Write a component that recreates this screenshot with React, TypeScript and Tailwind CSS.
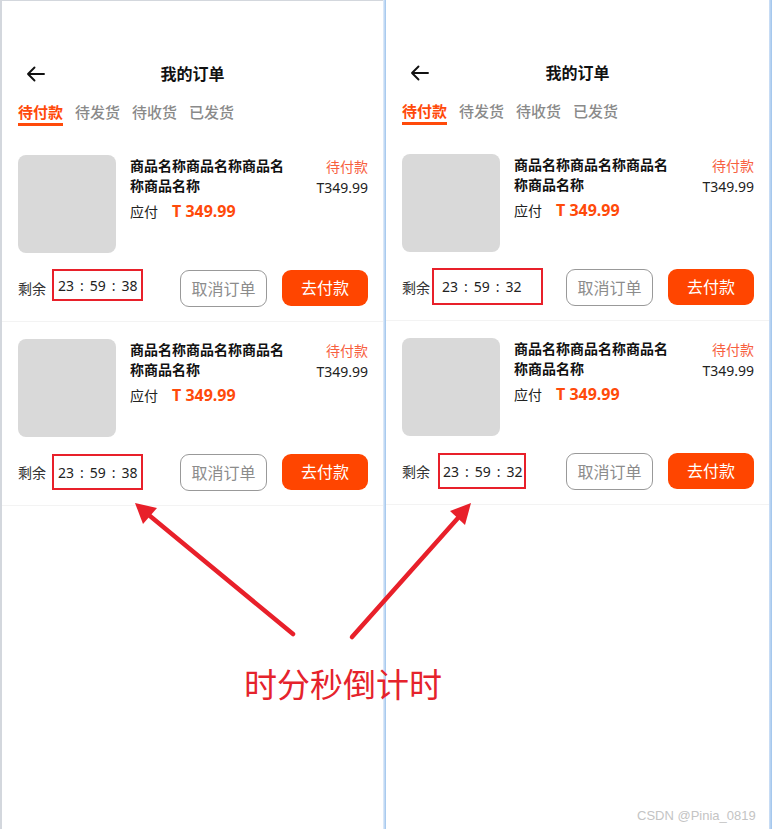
import React from "react";

const FONT = { fontFamily: '"Noto Sans", "Noto Sans CJK SC", sans-serif' };

type CardProps = {
  time: string;
  boxClass: string;
};

function BackArrow() {
  return (
    <svg width="19" height="16" viewBox="0 0 19 16" fill="none">
      <path d="M18 8H2M8.5 1.5L2 8l6.5 6.5" stroke="#111" strokeWidth="1.9" strokeLinecap="round" strokeLinejoin="round" />
    </svg>
  );
}

function Card({ time, boxClass }: CardProps) {
  return (
    <div className="flex flex-col">
      <div className="flex">
        <div className="w-[98px] h-[98px] shrink-0 rounded-[8px] bg-[#d9d9d9]" />
        <div className="ml-[14px] flex-1 flex">
          <div className="w-[158px] flex flex-col">
            <div className="text-[14px] leading-[20px] font-bold text-[#111] mt-[1px]">商品名称商品名称商品名称商品名称</div>
            <div className="flex items-center mt-[4px] h-[22px]">
              <span className="text-[14px] text-[#222]">应付</span>
              <span className="ml-[14px] text-[16px] font-bold text-[#ff4a0a]">T 349.99</span>
            </div>
          </div>
          <div className="flex-1 flex flex-col items-end">
            <div className="text-[14px] leading-[20px] text-[#f7603f] mt-[2px]">待付款</div>
            <div className="text-[14px] leading-[20px] text-[#222] mt-[1px]">T349.99</div>
          </div>
        </div>
      </div>
      <div className="flex items-start mt-[17px] h-[37px]">
        <span className="text-[14px] leading-[20px] text-[#333] mt-[9px] shrink-0">剩余</span>
        <div className={boxClass}>
          <span className="text-[14px] text-[#222] flex items-center">
            <span>23</span>
            <span className="mx-[6px]">:</span>
            <span>59</span>
            <span className="mx-[6px]">:</span>
            <span>{time}</span>
          </span>
        </div>
        <div className="flex-1" />
        <div className="w-[87px] h-[37px] rounded-[9px] border border-[#999] flex items-center justify-center text-[16px] text-[#8c8c8c]">取消订单</div>
        <div className="ml-[15px] w-[86px] h-[36px] rounded-[9px] bg-[#ff4500] flex items-center justify-center text-[16px] text-white">去付款</div>
      </div>
    </div>
  );
}

function Panel({ time, box1, box2, top }: { time: string; box1: string; box2: string; top: string }) {
  return (
    <div className="flex flex-col h-full">
      <div className={top} />
      <div className="relative h-[36px] flex items-center justify-center px-[16px]">
        <div className="absolute left-[24px] top-[10px]">
          <BackArrow />
        </div>
        <span className="text-[16px] font-bold text-[#111]">我的订单</span>
      </div>
      <div className="flex gap-[12px] pl-[16px] pt-[10px]">
        {["待付款", "待发货", "待收货", "已发货"].map((t, i) => (
          <div key={t} className="flex flex-col items-stretch">
            <span className={i === 0 ? "text-[15px] leading-[20px] font-bold text-[#ff4a0a]" : "text-[15px] leading-[20px] font-medium text-[#8a8a8a]"}>{t}</span>
            <div className={i === 0 ? "mt-[1px] h-[3px] bg-[#ff4a0a]" : "mt-[1px] h-[3px]"} />
          </div>
        ))}
      </div>
      <div className="pl-[16px] pr-[15px] pt-[29px] pb-[14px]">
        <Card time={time} boxClass={box1} />
      </div>
      <div className="h-px bg-[#f3f3f3]" />
      <div className="pl-[16px] pr-[15px] pt-[17px] pb-[14px]">
        <Card time={time} boxClass={box2} />
      </div>
      <div className="h-px bg-[#f3f3f3]" />
    </div>
  );
}

export default function App() {
  return (
    <div className="relative w-[772px] h-[829px] bg-white overflow-hidden" style={FONT}>
      <div className="flex h-full">
        <div className="w-[383px] h-full border-l-2 border-t border-[#d3d7dd]">
          <Panel
            time="38"
            top="h-[55px]"
            box1="ml-[6px] -mt-[1px] w-[91px] h-[32px] border-2 border-[#e8202a] flex items-center pl-[4px]"
            box2="ml-[6px] w-[91px] h-[36px] border-2 border-[#e8202a] flex items-center pl-[4px]"
          />
        </div>
        <div className="w-[3px] h-full bg-gradient-to-r from-[#e6effa] to-[#9dc3ec]" />
        <div className="w-[383px] h-full">
          <Panel
            time="32"
            top="h-[55px]"
            box1="ml-[2px] -mt-[1px] w-[111px] h-[37px] border-2 border-[#e8202a] flex items-center pl-[8px]"
            box2="ml-[8px] w-[88px] h-[36px] border-2 border-[#e8202a] flex items-center pl-[3px]"
          />
        </div>
        <div className="w-[3px] h-full bg-gradient-to-r from-[#cfe1f6] to-[#9dc3ec]" />
      </div>

      <svg className="absolute left-0 top-0 pointer-events-none" width="772" height="829" viewBox="0 0 772 829">
        <line x1="293" y1="634" x2="150" y2="516" stroke="#e8202a" strokeWidth="4.5" strokeLinecap="round" />
        <polygon points="135,503 157,508 143,524" fill="#e8202a" />
        <line x1="352" y1="637" x2="458" y2="518" stroke="#e8202a" strokeWidth="4.5" strokeLinecap="round" />
        <polygon points="471,503 465,525 450,511" fill="#e8202a" />
      </svg>

      <div className="absolute left-[244px] top-[663px] text-[33px] leading-[40px] text-[#e5232c]" style={{ fontFamily: '"Noto Sans CJK SC", sans-serif' }}>
        时分秒倒计时
      </div>
      <div className="absolute left-[637px] top-[806px] text-[13px] text-[#c4c4c4]" style={{ fontFamily: '"Liberation Sans", sans-serif' }}>
        CSDN @Pinia_0819
      </div>
    </div>
  );
}
